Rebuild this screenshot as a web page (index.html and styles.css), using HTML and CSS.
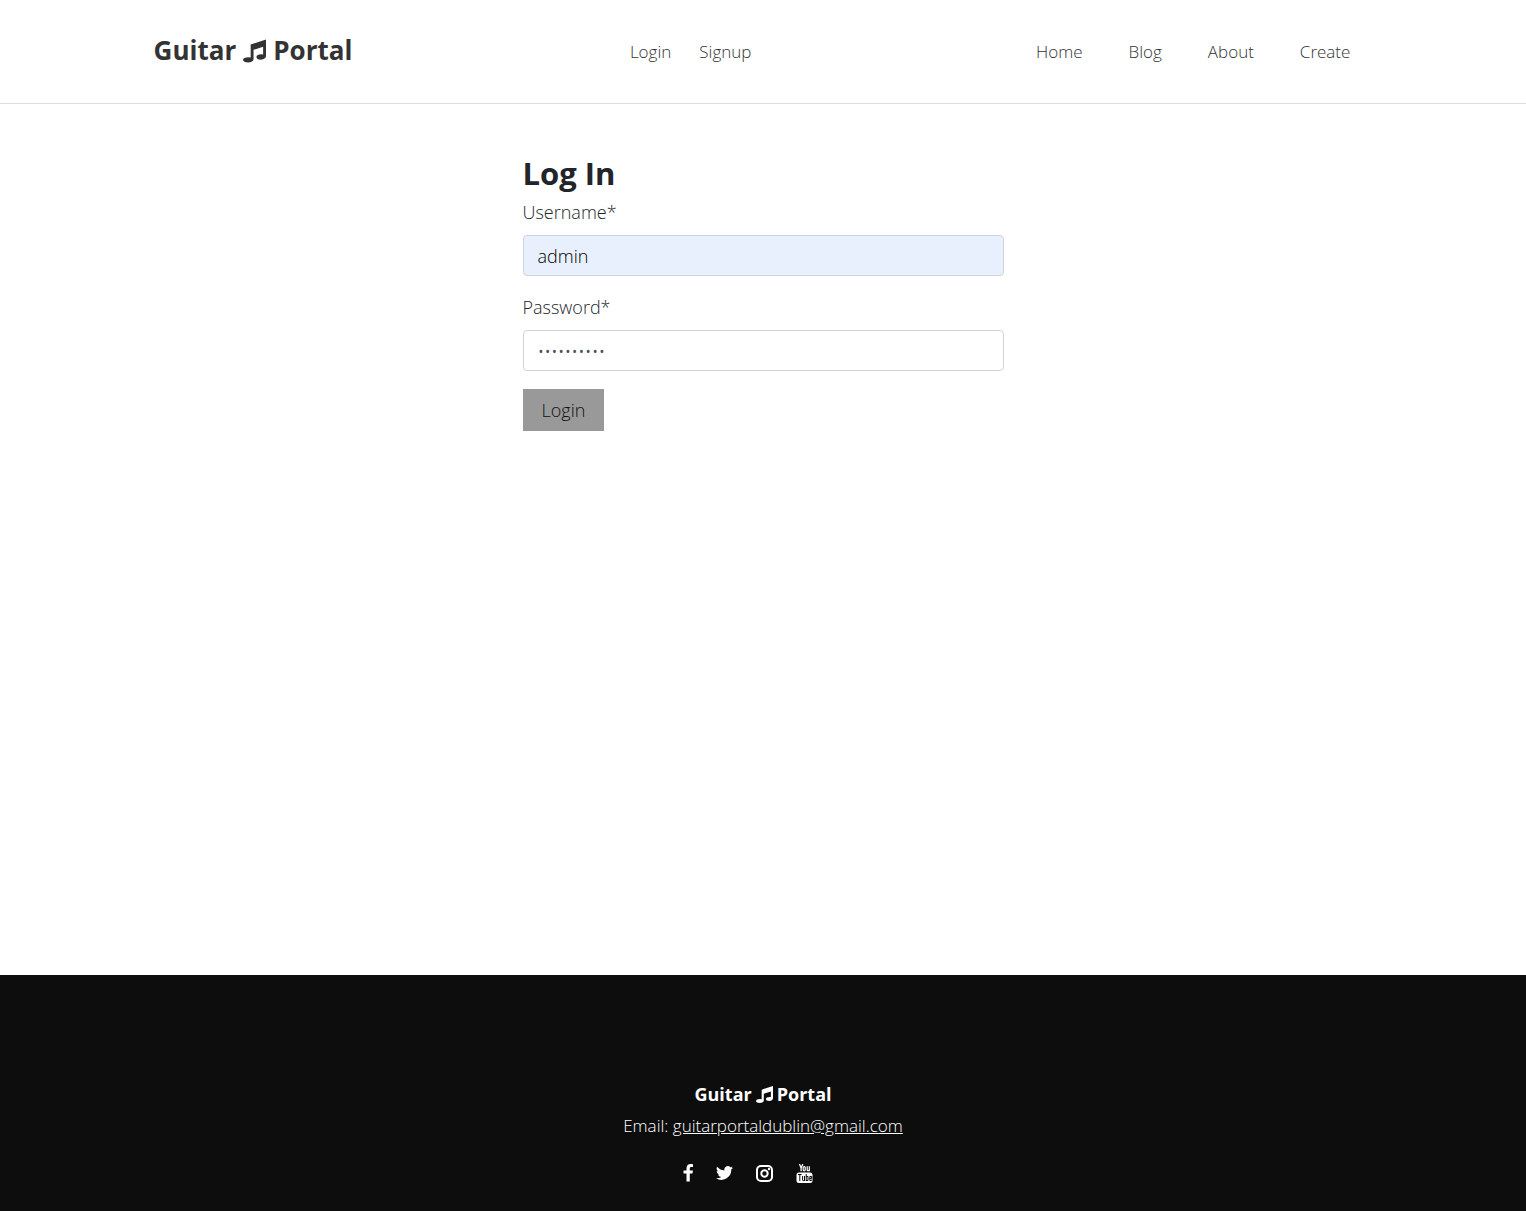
FILE: index.html
```html
<!DOCTYPE html>
<html lang="en">
<head>
<meta charset="utf-8">
<meta name="viewport" content="width=device-width, initial-scale=1">
<title>Guitar Portal</title>
<link rel="stylesheet" href="styles.css">
</head>
<body>
<header class="site-header">
  <div class="header-inner">
    <a class="brand" href="#"><span>Guitar</span><svg class="note" viewBox="0 0 24 24" aria-hidden="true"><path d="M8 5.200 24 0V17.200C24 19.400 21.600 21 18.600 21S14 19.800 14 18.200 16.200 15.400 19 15.400Q20.200 15.400 21 15.700V7.600L11 10.800V20.600C11 22.600 8.600 24 5.400 24S0 22.800 0 21.200 2.400 18.400 5.600 18.400Q7 18.400 8 18.700Z"/></svg><span>Portal</span></a>
    <nav class="account-nav" aria-label="Account"><a href="#">Login</a><a href="#">Signup</a></nav>
    <nav class="main-nav" aria-label="Main"><a href="#">Home</a><a href="#">Blog</a><a href="#">About</a><a href="#">Create</a></nav>
  </div>
</header>
<main class="content">
  <form class="login-form">
    <h1>Log In</h1>
    <label for="username">Username*</label>
    <input class="field autofilled" id="username" type="text" value="admin">
    <label for="password">Password*</label>
    <input class="field" id="password" type="password" value="abcdefghij">
    <button class="submit" type="button">Login</button>
  </form>
</main>
<footer class="site-footer">
  <p class="footer-brand"><span>Guitar</span><svg class="note" viewBox="0 0 24 24" aria-hidden="true"><path d="M8 5.200 24 0V17.200C24 19.400 21.600 21 18.600 21S14 19.800 14 18.200 16.200 15.400 19 15.400Q20.200 15.400 21 15.700V7.600L11 10.800V20.600C11 22.600 8.600 24 5.400 24S0 22.800 0 21.200 2.400 18.400 5.600 18.400Q7 18.400 8 18.700Z"/></svg><span>Portal</span></p>
  <p class="footer-email">Email: <a href="#">guitarportaldublin@gmail.com</a></p>
  <div class="social">
    <a href="#" aria-label="Facebook"><svg width="10" height="18" viewBox="0 0 10 18"><path d="M10 .200V3H8.300C7 3 6.800 3.600 6.800 4.500V6.500H9.900L9.500 9.600H6.800V17.500H3.500V9.600H.500V6.500H3.500V4.200C3.500 1.500 5.200 0 7.600 0 8.700 0 9.700.100 10 .200Z"/></svg></a>
    <a href="#" aria-label="Twitter"><svg width="17" height="18" viewBox="0 0 24 24"><path d="M24 4.600a10 10 0 0 1-2.800.800 5 5 0 0 0 2.200-2.700 10 10 0 0 1-3.100 1.200 4.900 4.900 0 0 0-8.400 4.500A14 14 0 0 1 1.700 3.200a4.900 4.900 0 0 0 1.500 6.500 5 5 0 0 1-2.200-.600 4.900 4.900 0 0 0 3.900 4.900 5 5 0 0 1-2.200.100 4.900 4.900 0 0 0 4.600 3.400A10 10 0 0 1 0 19.500a14 14 0 0 0 21.500-12.400A10 10 0 0 0 24 4.600Z"/></svg></a>
    <a href="#" aria-label="Instagram"><svg width="17" height="18" viewBox="0 0 17 18"><rect x="1" y="2" width="15" height="15" rx="4" fill="none" stroke="currentColor" stroke-width="2"/><circle cx="8.500" cy="9.500" r="3.200" fill="none" stroke="currentColor" stroke-width="2"/><circle cx="13" cy="5" r="1.200"/></svg></a>
    <a href="#" aria-label="YouTube"><svg width="17" height="20" viewBox="0 0 17 20"><path d="M3.500 0 5.100 4V7.300M6.900 0 5.100 4" fill="none" stroke="currentColor" stroke-width="1.300"/><rect x="7.200" y="2.600" width="2" height="4.200" rx="1" fill="none" stroke="currentColor" stroke-width="1.200"/><path d="M11.200 2.200V6C11.200 7.200 12.800 6.700 13.300 6M13.300 2.200V7.300" fill="none" stroke="currentColor" stroke-width="1.200"/><rect x=".500" y="8.500" width="16" height="10.500" rx="2.500"/><path class="cutout" d="M2 10.500H5.600M3.800 10.500V17M6.600 12V16C6.600 17 8 16.800 8.500 16M8.500 12V17M10.200 10V17M10.200 12.500H12V16.500H10.200M15.600 14.500H13.800M15.600 14.500V12.500H13.800V16.500H15.600V15.600"/></svg></a>
  </div>
</footer>
</body>
</html>
```
FILE: styles.css
```css
body {
  margin: 0;
  min-height: 100vh;
  display: flex;
  flex-direction: column;
  font: 300 18px/27px "Open Sans", sans-serif;
  color: #212529;
  background: #fff;
}

a {
  color: inherit;
  text-decoration: none;
}

svg {
  fill: currentColor;
}

.site-header {
  border-bottom: 1px solid #dedede;
  color: #333;
}

.header-inner {
  display: flex;
  flex-wrap: wrap;
  align-items: center;
  justify-content: space-between;
  margin: 0 10%;
  padding: 32px 0;
  font-size: 17px;
}

.brand {
  display: flex;
  align-items: center;
  gap: 7px;
  margin-right: 16px;
  padding: 0 0 2px 1px;
  font-size: 26px;
  font-weight: 700;
  line-height: 37px;
}

.note {
  width: 23px;
  height: 24px;
}

.account-nav,
.main-nav {
  display: flex;
}

.account-nav a {
  padding: 0 14px;
}

.main-nav a {
  padding: 0 23px;
}

.content {
  flex: 1;
}

.login-form {
  box-sizing: border-box;
  width: 100%;
  max-width: 481px;
  margin: 49px auto;
}

h1 {
  margin: 0 0 6px;
  font-size: 31px;
  line-height: 40px;
  font-weight: 700;
}

label {
  display: block;
  margin-bottom: 9px;
}

.field {
  display: block;
  box-sizing: border-box;
  width: 100%;
  height: 41px;
  margin-bottom: 18px;
  padding: 0 14px;
  border: 1px solid #ced4da;
  border-radius: 4px;
  font: inherit;
  color: #495057;
  background: #fff;
}

.autofilled {
  color: #000;
  background: #e8f0fe;
}

.submit {
  height: 42px;
  padding: 0 19px;
  border: 0;
  font: inherit;
  color: #111;
  background: #999;
}

.site-footer {
  padding: 106px 16px 27px;
  text-align: center;
  color: #fff;
  background: #0d0d0d;
}

.site-footer p {
  margin: 0 0 4px;
}

.footer-brand {
  display: flex;
  align-items: center;
  justify-content: center;
  gap: 4px;
  font-weight: 700;
}

.footer-brand .note {
  width: 17px;
  height: 17px;
}

.footer-email {
  font-size: 17px;
}

.footer-email a {
  text-decoration: underline;
}

.social {
  display: flex;
  justify-content: center;
  gap: 23px;
  margin-top: 25px;
  padding-right: 30px;
}

.social a,
.social svg {
  display: block;
}

.cutout {
  fill: none;
  stroke: #0d0d0d;
}
```
